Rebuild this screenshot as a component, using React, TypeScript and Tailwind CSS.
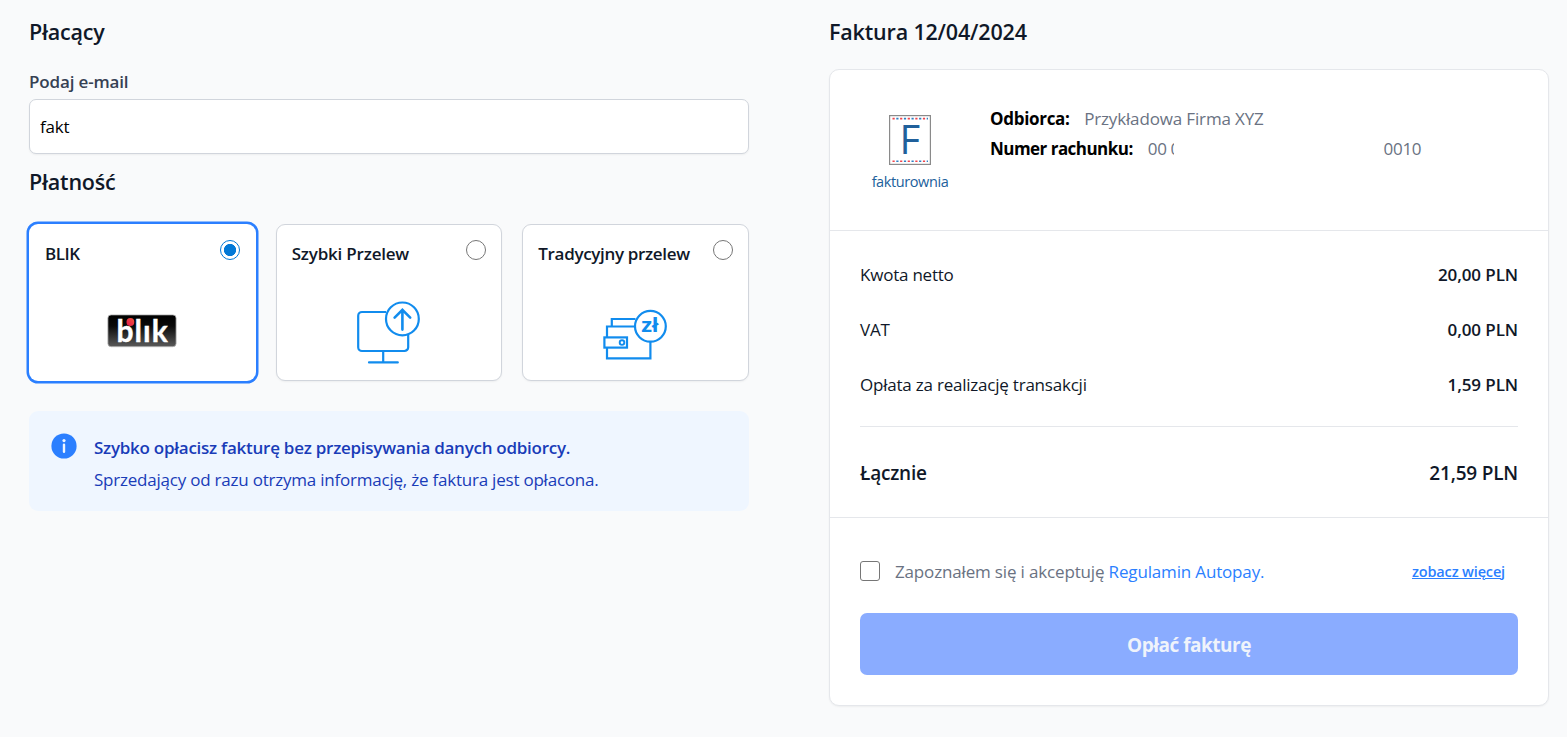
import React, { useState } from 'react'

interface PaymentMethod {
  id: string;
  label: string;
  labelClass: string;
  icon: React.ReactNode;
}

interface SummaryRow {
  label: string;
  value: string;
}

const BlikLogo = () => (
  <svg width="70" height="34" viewBox="0 0 70 34" className="relative -top-[2px] overflow-visible">
    <defs>
      <linearGradient id="blik-bg" x1="0" y1="0" x2="0" y2="1">
        <stop offset="0" stopColor="#000000" />
        <stop offset="0.35" stopColor="#0a0a0a" />
        <stop offset="1" stopColor="#5a5a5a" />
      </linearGradient>
      <linearGradient id="blik-dot" x1="0" y1="1" x2="1" y2="0">
        <stop offset="0" stopColor="#e4184f" />
        <stop offset="1" stopColor="#f0563a" />
      </linearGradient>
    </defs>
    <rect x="0.9" y="0.9" width="68.2" height="31.8" rx="3.2" fill="url(#blik-bg)" stroke="#b5b5b5" strokeWidth="0.8" />
    <text
      x="9.5"
      y="28.2"
      textLength="51"
      fontFamily="Lato, sans-serif"
      fontWeight="700"
      fontSize="30"
      fill="#ffffff"
      stroke="#ffffff"
      strokeWidth="0.4"
    >
      blık
    </text>
    <circle cx="23.4" cy="8" r="3.9" fill="url(#blik-dot)" />
  </svg>
);

const ComputerIcon = () => (
  <svg width="64" height="64" viewBox="0 0 64 64" fill="none" stroke="#118cee" strokeWidth="2.2">
    <path d="M29 11H5a3.8 3.8 0 0 0-3.8 3.8v31.4A3.8 3.8 0 0 0 5 50h42.4a3.8 3.8 0 0 0 3.8-3.8V34" />
    <path d="M26.2 50v11.5M12 61.4h28.8" strokeLinecap="round" />
    <circle cx="45.4" cy="17.9" r="16.4" />
    <path d="M45.4 28.6V9M37.6 16.6l7.8-7.8 7.8 7.8" strokeWidth="2.6" strokeLinecap="round" />
  </svg>
);

const WalletIcon = () => (
  <svg width="64" height="64" viewBox="0 0 64 64" fill="none" stroke="#118cee" strokeWidth="2.2" className="relative -left-[1px] overflow-visible">
    <path d="M32.5 18H8.8v7.5M31 25.5H4v10.5M4 47v10.4h43.4V40" />
    <rect x="1.4" y="36.4" width="22.6" height="10.2" />
    <circle cx="19" cy="41.6" r="2.3" strokeWidth="1.9" />
    <circle cx="47.4" cy="25.3" r="15.4" />
    <text
      x="38.2"
      y="31.4"
      textLength="17"
      lengthAdjust="spacingAndGlyphs"
      fontFamily="Open Sans, sans-serif"
      fontWeight="700"
      fontSize="19"
      fill="#118cee"
      stroke="none"
    >
      zł
    </text>
  </svg>
);

const FakturowniaLogo = () => (
  <div className="flex w-[80px] flex-col items-center">
    <svg width="42" height="50" viewBox="0 0 42 50" className="overflow-visible">
      <rect x="0.6" y="0.6" width="40.8" height="48.8" fill="#ffffff" stroke="#8a8a8a" strokeWidth="1.2" />
      <g strokeWidth="1.6" fill="none">
        <path d="M3.5 3.6H39" stroke="#f0434b" strokeDasharray="2.2 5.4" />
        <path d="M7.3 3.6H39" stroke="#2f7fc1" strokeDasharray="2.2 5.4" />
        <path d="M3.5 46.2H39" stroke="#f0434b" strokeDasharray="2.2 5.4" />
        <path d="M7.3 46.2H39" stroke="#2f7fc1" strokeDasharray="2.2 5.4" />
      </g>
      <text x="10.6" y="38.8" fontFamily="Open Sans, sans-serif" fontSize="40" fill="#20609b">
        F
      </text>
    </svg>
    <span className="mt-[7px] text-[14.5px] leading-[20px] tracking-[-0.4px] text-[#20609b]">fakturownia</span>
  </div>
);

const methods: PaymentMethod[] = [
  { id: 'blik', label: 'BLIK', labelClass: 'tracking-[-0.5px]', icon: <BlikLogo /> },
  { id: 'fast', label: 'Szybki Przelew', labelClass: 'tracking-[-0.2px]', icon: <ComputerIcon /> },
  { id: 'classic', label: 'Tradycyjny przelew', labelClass: 'tracking-[-0.33px]', icon: <WalletIcon /> },
];

const rows: SummaryRow[] = [
  { label: 'Kwota netto', value: '20,00 PLN' },
  { label: 'VAT', value: '0,00 PLN' },
  { label: 'Opłata za realizację transakcji', value: '1,59 PLN' },
];

const App = () => {
  const [email, setEmail] = useState('fakt');
  const [selected, setSelected] = useState('blik');
  const [accepted, setAccepted] = useState(false);

  return (
    <div className="flex h-[737px] w-[1567px] gap-[80px] overflow-hidden bg-[#f9fafb] pl-[29px] pt-[18px] font-['Open_Sans',sans-serif] text-[17px] tracking-[-0.22px] text-[#101828]">
      <section className="w-[720px]">
        <h2 className="text-[21.5px] font-semibold leading-[28px] tracking-[-0.2px]">Płacący</h2>
        <label htmlFor="email" className="mt-[23px] block font-semibold leading-[25px] tracking-[-0.15px] text-[#364153]">
          Podaj e-mail
        </label>
        <input
          id="email"
          type="text"
          value={email}
          onChange={(e) => setEmail(e.target.value)}
          className="mt-[5px] block h-[55px] w-full rounded-[7px] border border-[#d1d5dc] bg-white px-[10px] text-black shadow-xs outline-none"
        />

        <h2 className="mt-[14px] text-[21.5px] font-semibold leading-[28px] tracking-[-0.2px]">Płatność</h2>
        <div className="mt-[28px] grid grid-cols-3 gap-[20px]">
          {methods.map((method) => (
            <label
              key={method.id}
              className={
                selected === method.id
                  ? 'flex h-[157px] flex-col rounded-[9px] border border-transparent bg-white px-[15px] pt-[15px] shadow-[0_0_0_2.5px_#2b7fff]'
                  : 'flex h-[157px] flex-col rounded-[9px] border border-[#d1d5dc] bg-white px-[15px] pt-[15px] shadow-xs'
              }
            >
              <div className="flex h-[28px] items-start justify-between">
                <span className={`whitespace-nowrap font-semibold leading-[27px] ${method.labelClass}`}>{method.label}</span>
                <input
                  type="radio"
                  name="method"
                  checked={selected === method.id}
                  onChange={() => setSelected(method.id)}
                  className="size-[20px] shrink-0 appearance-none rounded-full border border-[#767676] bg-white checked:border-[#0078d7] checked:bg-[radial-gradient(circle,#0078d7_5.8px,#ffffff_6.4px)]"
                />
              </div>
              <div className="mt-[33px] flex h-[64px] items-center justify-center">{method.icon}</div>
            </label>
          ))}
        </div>

        <div className="mt-[30px] flex h-[100px] gap-[17px] rounded-[9px] bg-[#eff6ff] pl-[22px] pt-[21px] text-[#193cb8]">
          <svg width="26" height="26" viewBox="0 0 26 26" className="mt-[1px] shrink-0">
            <circle cx="13" cy="13" r="12.6" fill="#2b7fff" />
            <circle cx="13" cy="7.6" r="1.6" fill="#eff6ff" />
            <path d="M13 11.7v7.1" stroke="#eff6ff" strokeWidth="2.4" strokeLinecap="round" />
          </svg>
          <div className="whitespace-nowrap">
            <p className="font-semibold leading-[32px] tracking-[-0.26px]">Szybko opłacisz fakturę bez przepisywania danych odbiorcy.</p>
            <p className="leading-[32px]">Sprzedający od razu otrzyma informację, że faktura jest opłacona.</p>
          </div>
        </div>
      </section>

      <section className="w-[720px]">
        <h2 className="text-[21.5px] font-semibold leading-[28px] tracking-[-0.17px]">Faktura 12/04/2024</h2>
        <div className="mt-[23px] h-[637px] rounded-[10px] border border-[#e5e7eb] bg-white shadow-xs">
          <div className="flex h-[161px] border-b border-[#e5e7eb] pl-[40px]">
            <div className="pt-[45px]">
              <FakturowniaLogo />
            </div>
            <div className="ml-[40px] whitespace-nowrap pt-[34px] leading-[30px]">
              <div className="flex">
                <span className="font-bold tracking-[-0.3px] text-black">Odbiorca:</span>
                <span className="ml-[14.5px] tracking-[-0.15px] text-[#6a7282]">Przykładowa Firma XYZ</span>
              </div>
              <div className="flex tracking-[-0.3px] text-[#6a7282]">
                <span className="font-bold tracking-[-0.53px] text-black">Numer rachunku:</span>
                <span className="ml-[15px]">00</span>
                <span className="ml-[4px] w-[3px] overflow-hidden">0</span>
                <span className="ml-[210px]">0010</span>
              </div>
            </div>
          </div>

          <div className="h-[287px] border-b border-[#e5e7eb] px-[30px] pt-[16px]">
            {rows.map((row) => (
              <div key={row.label} className="flex h-[55px] items-center justify-between">
                <span>{row.label}</span>
                <span className="font-semibold tracking-[-0.1px]">{row.value}</span>
              </div>
            ))}
            <div className="mt-[14px] flex h-[92px] items-center justify-between border-t border-[#e5e7eb] pt-[1px] text-[19px] font-semibold tracking-[-0.2px]">
              <span>Łącznie</span>
              <span>21,59 PLN</span>
            </div>
          </div>

          <div className="px-[30px] pt-[38px]">
            <div className="flex h-[30px] items-center">
              <input
                type="checkbox"
                checked={accepted}
                onChange={(e) => setAccepted(e.target.checked)}
                className="size-[20px] appearance-none rounded-[3px] border border-[#767676] bg-white checked:bg-[#0078d7]"
              />
              <p className="ml-[15px] pt-[1px] tracking-[-0.16px] text-[#6a7282]">
                Zapoznałem się i akceptuję <a className="text-[#2b7fff]">Regulamin Autopay.</a>
              </p>
              <a className="ml-auto mr-[13px] pt-[1px] text-[14.5px] font-semibold tracking-[-0.15px] text-[#2b7fff] underline">zobacz więcej</a>
            </div>
            <button className="mt-[27px] h-[62px] w-full rounded-[7px] bg-[#8aacff] pt-[2px] text-[19px] font-bold tracking-[-0.5px] text-[#eff3fb]">
              Opłać fakturę
            </button>
          </div>
        </div>
      </section>
    </div>
  )
}

export default App
